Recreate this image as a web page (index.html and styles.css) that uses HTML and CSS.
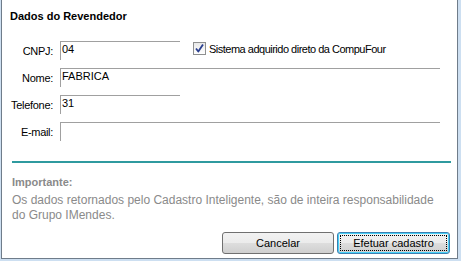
FILE: index.html
```html
<!DOCTYPE html>
<html>
<head>
  <link rel="stylesheet" href="styles.css">
</head>
<body>
  <div class="frame">
    <div class="panel">
      <div class="title">Dados do Revendedor</div>

      <div class="form">
        <label class="label">CNPJ:</label>
        <div class="row-fields">
          <div class="field short">04</div>
          <div class="check">
            <span class="box">
              <svg width="11" height="11" viewBox="0 0 11 11">
                <path d="M2 5.5 L4.3 8.5 L9 1.5" fill="none" stroke="#2a3f8f" stroke-width="1.8" stroke-linejoin="round"/>
              </svg>
            </span>
            <span class="check-text">Sistema adquirido direto da CompuFour</span>
          </div>
        </div>

        <label class="label">Nome:</label>
        <div class="field long">FABRICA</div>

        <label class="label">Telefone:</label>
        <div class="field short">31</div>

        <label class="label">E-mail:</label>
        <div class="field long"></div>
      </div>

      <div class="separator"></div>

      <div class="notice">
        <div class="notice-title">Importante:</div>
        <p>Os dados retornados pelo Cadastro Inteligente, são de inteira responsabilidade do Grupo IMendes.</p>
      </div>

      <div class="buttons">
        <button class="btn">Cancelar</button>
        <button class="btn default"><span class="focus">Efetuar cadastro</span></button>
      </div>
    </div>
  </div>
</body>
</html>
```

FILE: styles.css
```css
body {
  margin: 0;
  font-family: "Liberation Sans", Arial, sans-serif;
  font-size: 11px;
  color: #000;
}

.frame {
  width: 461px;
  height: 261px;
  background-color: #cddff1;
  padding-left: 1px;
  box-sizing: border-box;
}

.panel {
  width: 457px;
  height: 259px;
  box-sizing: border-box;
  background-color: #fff;
  border-left: 1px solid #6f7c8a;
  border-right: 1px solid #6f7c8a;
  border-bottom: 1px solid #6f7c8a;
  padding: 10px 7px 0 8px;
}

.title {
  font-weight: bold;
  font-size: 11px;
  height: 13px;
  line-height: 13px;
}

.form {
  display: grid;
  grid-template-columns: 43px 380px;
  column-gap: 7px;
  row-gap: 8px;
  margin-top: 18px;
}

.label {
  text-align: right;
  padding-top: 4px;
  letter-spacing: -0.3px;
}

.row-fields {
  display: flex;
  align-items: flex-start;
}

.field {
  height: 19px;
  box-sizing: border-box;
  border-top: 1px solid #a0a0a0;
  border-left: 1px solid #a0a0a0;
  padding: 1px 0 0 1px;
  line-height: 13px;
}

.short {
  width: 120px;
}

.long {
  width: 380px;
}

.check {
  display: flex;
  align-items: center;
  gap: 3px;
  margin-left: 13px;
  margin-top: 1px;
}

.check-text {
  letter-spacing: -0.5px;
}

.box {
  width: 13px;
  height: 13px;
  box-sizing: border-box;
  border: 1px solid #8e8f8f;
  background: linear-gradient(#e8e8e8, #ffffff);
  display: flex;
  align-items: center;
  justify-content: center;
}

.separator {
  height: 2px;
  background-color: #2f9a9f;
  margin-top: 20px;
  margin-left: 2px;
  width: 439px;
}

.notice {
  color: #8a8a8a;
  margin-top: 12px;
  padding-left: 2px;
}

.notice-title {
  font-weight: bold;
  font-size: 11px;
  line-height: 14px;
}

.notice p {
  margin: 4px 0 0;
  font-size: 12px;
  line-height: 15px;
}

.buttons {
  display: flex;
  justify-content: flex-end;
  gap: 3px;
  margin-top: 9px;
}

.btn {
  width: 112px;
  height: 22px;
  box-sizing: border-box;
  border: 1px solid #707070;
  border-radius: 3px;
  background: linear-gradient(#f2f2f2 0%, #ebebeb 50%, #dddddd 51%, #cfcfcf 100%);
  font-family: "Liberation Sans", Arial, sans-serif;
  font-size: 11px;
  color: #000;
  padding: 0;
}

.btn.default {
  width: 113px;
  border-color: #3c7fb1;
  padding: 2px;
  box-shadow: inset 0 0 0 1px #48d1f8;
}

.focus {
  display: flex;
  align-items: center;
  justify-content: center;
  height: 100%;
  border: 1px dotted #000;
  box-sizing: border-box;
}
```
